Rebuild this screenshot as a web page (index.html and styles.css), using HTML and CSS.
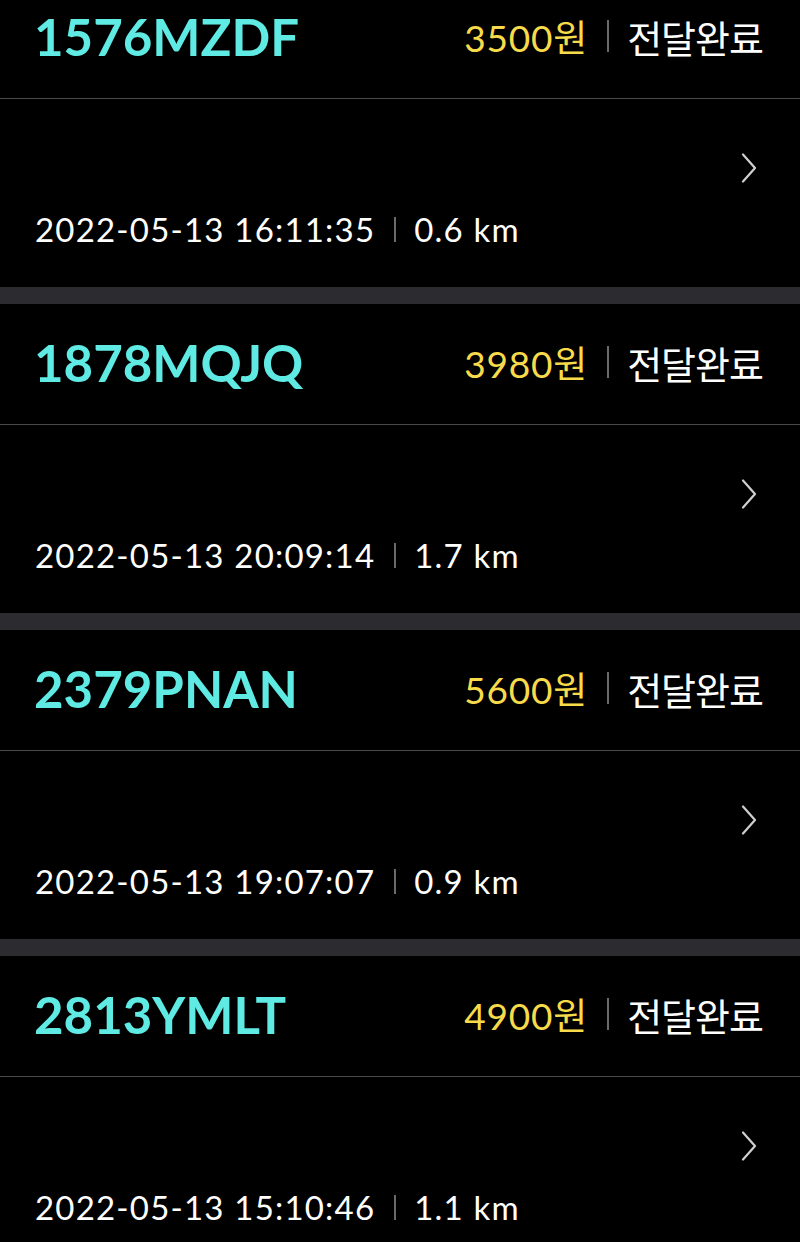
FILE: index.html
```html
<!DOCTYPE html>
<html lang="ko">
<head>
<meta charset="utf-8">
<link rel="stylesheet" href="styles.css">
</head>
<body>
<div class="list">
  <div class="card">
    <div class="head">
      <div class="code">1576MZDF</div>
      <div class="meta"><span class="price">3500원</span><span class="bar"></span><span class="status">전달완료</span></div>
    </div>
    <div class="body">
      <svg class="chev" width="16" height="30" viewBox="0 0 16 30"><path d="M2 1.5 L14 15 L2 28.5" fill="none" stroke="#cfcfcf" stroke-width="2.2" stroke-linecap="round" stroke-linejoin="round"/></svg>
      <div class="info"><span>2022-05-13 16:11:35</span><span class="bar small"></span><span>0.6 km</span></div>
    </div>
  </div>
  <div class="card">
    <div class="head">
      <div class="code">1878MQJQ</div>
      <div class="meta"><span class="price">3980원</span><span class="bar"></span><span class="status">전달완료</span></div>
    </div>
    <div class="body">
      <svg class="chev" width="16" height="30" viewBox="0 0 16 30"><path d="M2 1.5 L14 15 L2 28.5" fill="none" stroke="#cfcfcf" stroke-width="2.2" stroke-linecap="round" stroke-linejoin="round"/></svg>
      <div class="info"><span>2022-05-13 20:09:14</span><span class="bar small"></span><span>1.7 km</span></div>
    </div>
  </div>
  <div class="card">
    <div class="head">
      <div class="code">2379PNAN</div>
      <div class="meta"><span class="price">5600원</span><span class="bar"></span><span class="status">전달완료</span></div>
    </div>
    <div class="body">
      <svg class="chev" width="16" height="30" viewBox="0 0 16 30"><path d="M2 1.5 L14 15 L2 28.5" fill="none" stroke="#cfcfcf" stroke-width="2.2" stroke-linecap="round" stroke-linejoin="round"/></svg>
      <div class="info"><span>2022-05-13 19:07:07</span><span class="bar small"></span><span>0.9 km</span></div>
    </div>
  </div>
  <div class="card">
    <div class="head">
      <div class="code">2813YMLT</div>
      <div class="meta"><span class="price">4900원</span><span class="bar"></span><span class="status">전달완료</span></div>
    </div>
    <div class="body">
      <svg class="chev" width="16" height="30" viewBox="0 0 16 30"><path d="M2 1.5 L14 15 L2 28.5" fill="none" stroke="#cfcfcf" stroke-width="2.2" stroke-linecap="round" stroke-linejoin="round"/></svg>
      <div class="info"><span>2022-05-13 15:10:46</span><span class="bar small"></span><span>1.1 km</span></div>
    </div>
  </div>
</div>
</body>
</html>
```
FILE: styles.css
```css
html, body {
  margin: 0;
  padding: 0;
  background: #000;
  overflow: hidden;
}
body {
  font-family: Lato, "Noto Sans CJK KR", sans-serif;
  color: #fff;
}
.list {
  margin-top: -22px;
  display: flex;
  flex-direction: column;
}
.card {
  background: #000;
  border-bottom: 17px solid #2b2b30;
}
.head {
  display: flex;
  align-items: center;
  justify-content: space-between;
  padding: 0 37px 4px 34px;
  border-bottom: 1px solid #4a4a4a;
  box-sizing: border-box;
  height: 121px;
}
.code {
  font-family: Lato, sans-serif;
  font-weight: 700;
  font-size: 51px;
  color: #5feae4;
}
.meta {
  display: flex;
  align-items: center;
  font-family: Lato, "Noto Sans CJK KR", sans-serif;
  font-size: 37px;
}
.price {
  color: #f8db4a;
  letter-spacing: 0.8px;
}
.status {
  color: #fff;
  font-family: "Noto Sans CJK KR", sans-serif;
  font-size: 38px;
  letter-spacing: -1px;
}
.bar {
  display: inline-block;
  width: 2px;
  height: 32px;
  background: #6a6a6a;
  margin: 0 18px 0 19px;
}
.bar.small {
  height: 25px;
  margin: 0 18px 0 19px;
}
.body {
  height: 188px;
  display: flex;
  flex-direction: column;
  align-items: stretch;
  padding: 54px 0 0 35px;
  box-sizing: border-box;
}
.chev {
  align-self: flex-end;
  margin-right: 43px;
  display: block;
}
.info {
  margin-top: 26px;
  display: flex;
  align-items: center;
  height: 40px;
  font-size: 33px;
  letter-spacing: 1.2px;
  color: #fff;
}
```
